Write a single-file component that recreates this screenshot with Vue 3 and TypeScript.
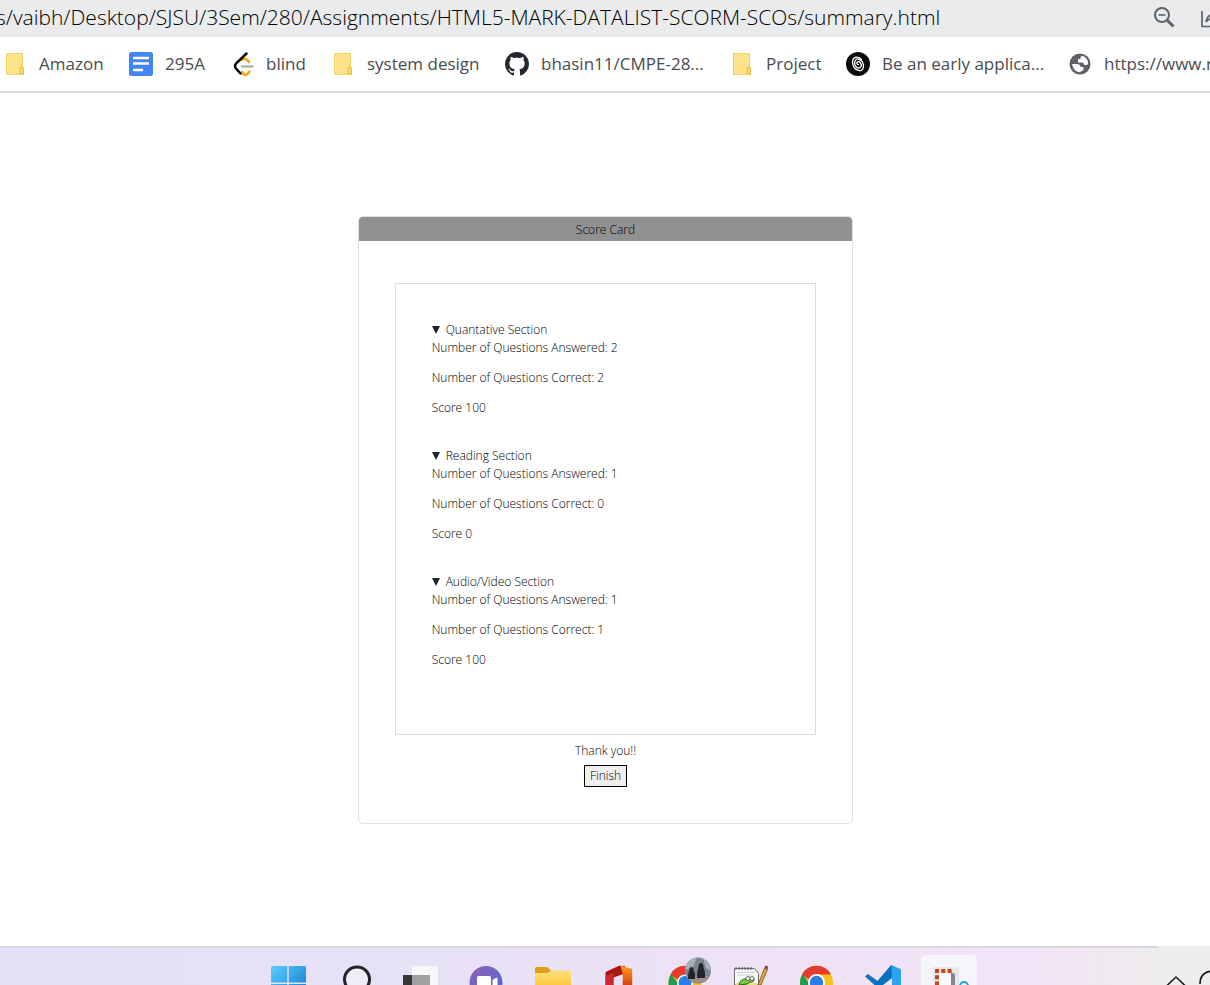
<script setup lang="ts">
import { ref } from 'vue'

interface Bookmark {
  icon: 'folder' | 'docs' | 'leetcode' | 'github' | 'spiral' | 'globe'
  label: string
}

interface Section {
  title: string
  answered: number
  correct: number
  score: number
}

const address = ref('s/vaibh/Desktop/SJSU/3Sem/280/Assignments/HTML5-MARK-DATALIST-SCORM-SCOs/summary.html')

const bookmarks: Bookmark[] = [
  { icon: 'folder', label: 'Amazon' },
  { icon: 'docs', label: '295A' },
  { icon: 'leetcode', label: 'blind' },
  { icon: 'folder', label: 'system design' },
  { icon: 'github', label: 'bhasin11/CMPE-28...' },
  { icon: 'folder', label: 'Project' },
  { icon: 'spiral', label: 'Be an early applica...' },
  { icon: 'globe', label: 'https://www.r' },
]

const sections: Section[] = [
  { title: 'Quantative Section', answered: 2, correct: 2, score: 100 },
  { title: 'Reading Section', answered: 1, correct: 0, score: 0 },
  { title: 'Audio/Video Section', answered: 1, correct: 1, score: 100 },
]
</script>

<template>
  <div class="screen">
    <header class="toolbar">
      <input v-model="address" class="address" type="text" aria-label="Address" />
      <button class="tool" aria-label="Zoom">
        <svg width="24" height="24" viewBox="0 0 24 24" fill="none" stroke="#5f6368" stroke-width="2">
          <circle cx="9" cy="8" r="7" />
          <path d="M14 13 20.500 19.500" stroke-width="3" />
          <path d="M5.500 8h7" stroke-width="1.600" />
        </svg>
      </button>
      <button class="tool share" aria-label="Share">
        <svg width="24" height="24" viewBox="0 0 24 24" fill="none" stroke="#5f6368" stroke-width="1.700">
          <path d="M2 4v15.500h16V15" />
          <path d="M6 15c1-6 4-8 9-8V3l6 6-6 6v-4c-4 0-7 1-9 4z" />
        </svg>
      </button>
    </header>

    <nav class="bookmarks" aria-label="Bookmarks">
      <a v-for="(item, i) in bookmarks" :key="i" class="bookmark" href="#">
        <svg v-if="item.icon === 'folder'" class="mark" viewBox="0 0 24 24">
          <path d="M3.500 1.500h16v14h1v7h-17z" fill="#ffe38a" stroke="#f3d368" />
          <path d="M17 22v-5q0-2 1.500-2t2 2v5z" fill="#fbdc70" stroke="#e3b93c" />
        </svg>
        <svg v-else-if="item.icon === 'docs'" class="mark" viewBox="0 0 24 24">
          <rect width="24" height="24" rx="2.500" fill="#4285f4" />
          <path d="M4 6h16M4 11.500h16M4 18h10" stroke="#fff" stroke-width="2.600" />
        </svg>
        <svg v-else-if="item.icon === 'leetcode'" class="mark" viewBox="0 0 24 24" fill="none" stroke-linecap="round" stroke-width="2.500">
          <path d="M12 8q3-2.500 5 0l2 2M12 20q3 5 6 1.500l1.500-2" stroke="#ffa116" />
          <path d="M12 14.500h10.500" stroke="#b3b3b3" />
          <path d="M16.500 1.500 6 11.500q-2 2.500 0 5l4.500 5" stroke="#070706" />
        </svg>
        <svg v-else-if="item.icon === 'github'" class="mark" viewBox="0 0 16 16">
          <path fill="#24292f" d="M8 0C3.580 0 0 3.580 0 8c0 3.540 2.290 6.530 5.470 7.590.4.070.55-.17.55-.38 0-.19-.01-.82-.01-1.490-2.010.37-2.530-.49-2.690-.94-.09-.23-.48-.94-.82-1.130-.28-.15-.68-.52-.01-.53.63-.01 1.080.58 1.230.82.72 1.210 1.870.87 2.330.66.07-.52.28-.87.51-1.070-1.780-.2-3.640-.89-3.640-3.950 0-.87.31-1.590.82-2.150-.08-.2-.36-1.020.08-2.120 0 0 .67-.21 2.200.82.64-.18 1.320-.27 2-.27s1.360.09 2 .27c1.530-1.040 2.200-.82 2.200-.82.44 1.100.16 1.920.08 2.120.51.56.82 1.270.82 2.150 0 3.070-1.870 3.750-3.650 3.950.29.25.54.73.54 1.480 0 1.070-.01 1.930-.01 2.200 0 .21.15.46.55.38A8.010 8.010 0 0 0 16 8c0-4.420-3.580-8-8-8z" />
        </svg>
        <svg v-else-if="item.icon === 'spiral'" class="mark" viewBox="0 0 24 24">
          <circle cx="12" cy="12" r="12" fill="#0b0b0b" />
          <g fill="none" stroke="#fff" stroke-width="1.300" stroke-linecap="round">
            <path d="M12.500 12.500c-1.500.5-2.500-2-.8-2.700 2-.8 4.300 2 3.300 4.700-1.200 2.600-5 1.500-6-1.500-1-3.500.5-6.500 3.500-6 3.500.7 5.700 5 4.800 8.500-.6 2.500-2.500 3.700-4.800 3" />
            <path d="M15.500 7.500C12.500 3.800 8 4.500 6.800 8c-1.200 4 1.200 9.500 5.200 10.200" />
          </g>
        </svg>
        <svg v-else class="mark" viewBox="0 0 24 24">
          <circle cx="12" cy="12" r="10.500" fill="#5f6368" />
          <path d="M4 12h5.500q3 .5 3 3h3v3l-4 2.300q-6-1-7.500-8.300zM14.500 3.800l-2 1.200v2H10v3.500h5l1.500 2.500h2.500l1.200-1.500q-.5-5.500-5.700-7.700z" fill="#fff" />
        </svg>
        <span class="label">{{ item.label }}</span>
      </a>
    </nav>

    <main class="page">
      <section class="card">
        <h1 class="card-title">Score Card</h1>
        <div class="card-body">
          <div class="results">
            <details v-for="s in sections" :key="s.title" class="result" open>
              <summary>
                <svg class="caret" width="8" height="8" viewBox="0 0 8 8"><path d="M0 0h8L4 8z" fill="#212529" /></svg>
                {{ s.title }}
              </summary>
              <p>Number of Questions Answered: {{ s.answered }}</p>
              <p>Number of Questions Correct: {{ s.correct }}</p>
              <p>Score {{ s.score }}</p>
            </details>
          </div>
          <p class="thanks">Thank you!!</p>
          <button class="finish">Finish</button>
        </div>
      </section>
    </main>

    <footer class="taskbar">
      <div class="edge"></div>
      <div class="apps">
        <button class="app" aria-label="Start">
          <svg viewBox="0 0 66 37">
            <defs>
              <linearGradient id="win" x1="16" y1="18" x2="51" y2="53" gradientUnits="userSpaceOnUse"><stop stop-color="#5ccdfb" /><stop offset="1" stop-color="#0873cf" /></linearGradient>
            </defs>
            <path d="M17.500 18H32.300V34.500H16V19.500q0-1.500 1.500-1.500zM33.700 18H49.500q1.500 0 1.500 1.500v15H33.700zM16 36h16.300v1H16zM33.700 36H51v1H33.700z" fill="url(#win)" />
          </svg>
        </button>
        <button class="app" aria-label="Search">
          <svg viewBox="0 0 66 37"><circle cx="36" cy="31.500" r="12.500" fill="#f0edfa" stroke="#242428" stroke-width="3" /></svg>
        </button>
        <button class="app" aria-label="Task view">
          <svg viewBox="0 0 66 37">
            <path d="M16 27h27v10H16z" fill="#373737" />
            <path d="M25 18h26v19H25z" fill="#f7f7f8" />
            <path d="M25 27h18v10H25z" fill="#a0a0a3" />
          </svg>
        </button>
        <button class="app" aria-label="Chat">
          <svg viewBox="0 0 66 37">
            <defs><linearGradient id="chat" x1="0" y1="0" x2="1" y2="1"><stop stop-color="#8f62b2" /><stop offset="1" stop-color="#4c68d6" /></linearGradient></defs>
            <circle cx="33" cy="34.500" r="16.500" fill="url(#chat)" />
            <path d="M25.500 28H36.500q1.500 0 1.500 1.500V37H24V29.500q0-1.500 1.500-1.500zM39.500 32l4-2.500q1 0 1 1V37h-5z" fill="#fff" />
          </svg>
        </button>
        <button class="app" aria-label="File Explorer">
          <svg viewBox="0 0 66 37">
            <defs><linearGradient id="folder" x1="0" y1="0" x2="0" y2="1"><stop stop-color="#fee07c" /><stop offset="1" stop-color="#fbc93f" /></linearGradient></defs>
            <path d="M17.500 19H28l4 3.500V28H16v-7.500q0-1.500 1.500-1.500z" fill="#dd9d14" />
            <path d="M16 25h12l5-2.500h17.500q1.500 0 1.500 1.500v13H16z" fill="url(#folder)" />
          </svg>
        </button>
        <button class="app" aria-label="Office">
          <svg viewBox="0 0 66 37">
            <defs><linearGradient id="office" x1="0" y1="0" x2="0" y2="1"><stop stop-color="#ff9c22" /><stop offset="1" stop-color="#d9410f" /></linearGradient></defs>
            <path d="M20.500 24 34 17.800 40 18v7.500l-11.500 4V37h-8z" fill="#a71a12" />
            <path d="M20.500 28l8-3v12h-8z" fill="#cf2732" />
            <path d="M35.500 17.800 46 20.500q1.200.3 1.200 1.500v15h-9.500V26z" fill="url(#office)" />
          </svg>
        </button>
        <button class="app" aria-label="Chrome, profile 1">
          <svg viewBox="0 0 66 37">
            <defs><clipPath id="face"><circle cx="47" cy="22.500" r="13" /></clipPath></defs>
            <circle cx="34" cy="34.500" r="16.500" fill="#fbc116" />
            <path d="M17.500 34.500q0-5 2.500-8.500l8 11H17.600z" fill="#229a50" />
            <path d="M19.500 26.500a16.500 16.500 0 0 1 29 0H34l-6.500 6z" fill="#e33b2e" />
            <circle cx="34" cy="34.500" r="8" fill="#fff" />
            <circle cx="34" cy="34.500" r="6.500" fill="#2d7de8" />
            <g clip-path="url(#face)">
              <path d="M34 9h26v27H34z" fill="#788592" />
              <path d="M34 9h12l-4 10-8 3zM52 9h8v14l-5-3z" fill="#a9afb5" />
              <path d="M34 28h26v8H34z" fill="#998f8b" />
              <path d="M37 31q0-7 1.500-9 0-3 2-3t2 3q2 3 1.500 9zM46 30q0-8 1.500-10 0-5 2.500-5t2.500 5q2 3 1.500 10z" fill="#24232b" />
            </g>
          </svg>
        </button>
        <button class="app" aria-label="Notepad++">
          <svg viewBox="0 0 66 37">
            <path d="M17.500 20.500h20l4 5V37h-24z" fill="#fbfcf8" stroke="#6f7170" />
            <path d="M19 19v3m3-3v3m3-3v3m3-3v3m3-3v3m3-3v3" stroke="#555" />
            <path d="M20 24.500h18M20 27h16" stroke="#c6ccd8" />
            <path d="M19 35h21v2H19z" fill="#e8e07b" />
            <path d="M22 37q1-6 7-6 1-3 4-1 4-2 4 2-1 3-4 2l-3 2z" fill="#79c943" stroke="#315d21" />
            <circle cx="31" cy="30.500" r="2" fill="#fff" stroke="#263820" stroke-width=".7" />
            <circle cx="35" cy="30.500" r="2" fill="#fff" stroke="#263820" stroke-width=".7" />
            <path d="M41 37l6.500-17 3 1.500L44 37z" fill="#dfa43d" stroke="#735020" stroke-width=".8" />
            <path d="M47.500 20l1-2.500 2.500 1-.5 3z" fill="#7b4040" />
          </svg>
        </button>
        <button class="app" aria-label="Chrome">
          <svg viewBox="0 0 66 37">
            <circle cx="33.500" cy="34.500" r="16.500" fill="#fbc116" />
            <path d="M17 34.500q0-5 2.500-8.500l8 11H17.200z" fill="#229a50" />
            <path d="M19 26.500a16.500 16.500 0 0 1 29 0H33.500l-6.500 6z" fill="#e33b2e" />
            <circle cx="33.500" cy="34.500" r="8.500" fill="#fff" />
            <circle cx="33.500" cy="34.500" r="6.700" fill="#2d7de8" />
          </svg>
        </button>
        <button class="app" aria-label="Visual Studio Code">
          <svg viewBox="0 0 66 37">
            <path d="M16 28.500l3-2.500 12.500 9V37h-6z" fill="#1673b5" />
            <path d="M25 37 42 17.300l3.500 1.200V28L34 37z" fill="#0871bd" />
            <path d="M42.500 17.200 50.500 20.500q1.500.7 1.500 2V37h-9z" fill="#2ba6ee" />
          </svg>
        </button>
        <button class="app active" aria-label="Snipping Tool">
          <svg viewBox="0 0 66 37">
            <path d="M17 18h23q3 0 3 3v16H17z" fill="#e8e8ec" />
            <path d="M23 24h12v13H23z" fill="#fafafc" />
            <path d="M35 24h2q2 0 2 2v11h-4z" fill="#85858b" />
            <path d="M19 22h17M21 26.300V37" fill="none" stroke="#cb4319" stroke-width="4" stroke-dasharray="4 2.300" />
            <circle cx="48" cy="37" r="4" fill="none" stroke="#23a3dc" stroke-width="2" />
          </svg>
        </button>
      </div>
      <button class="tray" aria-label="Show hidden icons">
        <svg width="52" height="37" viewBox="0 0 52 37" fill="none" stroke="#1c1c1c" stroke-width="1.600">
          <path d="M9 37.500l9-8.500 9 8.500M42 36q0-13 14-13" />
        </svg>
      </button>
    </footer>
  </div>
</template>

<style>
body {
  margin: 0;
}
</style>

<style scoped>
.screen {
  display: flex;
  flex-direction: column;
  height: 100vh;
  overflow: hidden;
  background: #fff;
  color: #212529;
  font-family: "Open Sans", "Noto Sans", sans-serif;
}

button {
  font-family: inherit;
}

.toolbar {
  display: flex;
  flex: none;
  align-items: center;
  height: 37px;
  overflow: hidden;
  background: #e9ebed;
}

.address {
  flex: 1;
  min-width: 0;
  height: 37px;
  padding: 0 0 4px;
  box-sizing: border-box;
  border: 0;
  outline: 0;
  background: transparent;
  color: #000;
  font: 300 21px/33px "Open Sans", "Noto Sans", sans-serif;
  text-indent: -4px;
}

.tool {
  display: flex;
  flex: none;
  width: 24px;
  margin-right: 23px;
  padding: 0;
  border: 0;
  background: transparent;
}

.share {
  width: 10px;
  margin-right: 0;
  overflow: hidden;
}

.share svg {
  flex: none;
}

.bookmarks {
  display: grid;
  flex: none;
  grid-template-columns: 126px 101px 101px 174px 225px 116px 222px 1fr;
  height: 54px;
  padding-left: 3px;
  overflow: hidden;
  border-bottom: 2px solid #dadbdd;
}

.bookmark {
  display: flex;
  align-items: center;
  gap: 12px;
  min-width: 0;
  color: #494c50;
  font-size: 17px;
  text-decoration: none;
  white-space: nowrap;
}

.label {
  padding-bottom: 2px;
}

.mark {
  flex: none;
  width: 24px;
  height: 24px;
}

.page {
  display: flex;
  flex: 1;
  align-items: center;
  justify-content: center;
  padding-left: 1px;
  color: #000;
  font-size: 12px;
  font-weight: 300;
  line-height: 18px;
}

.card {
  box-sizing: border-box;
  width: 41%;
  border: 1px solid #dfdfdf;
  border-radius: 5px;
  overflow: hidden;
}

.card-title {
  margin: 0;
  padding: 4px 12px 2px;
  background: #909193;
  font-size: 12px;
  font-weight: inherit;
  text-align: center;
}

.card-body {
  display: flex;
  flex-direction: column;
  align-items: center;
  padding: 42px 36px 36px;
}

.results {
  box-sizing: border-box;
  width: 100%;
  padding: 37px 36px 35px;
  border: 1px solid #dedede;
}

.result {
  margin-bottom: 30px;
}

.result p {
  margin: 0 0 12px;
}

summary {
  display: flex;
  align-items: center;
  gap: 6px;
  list-style: none;
}

.thanks {
  margin: 7px 0 5px;
}

.finish {
  height: 22px;
  padding: 1px 5px 0;
  border: 1px solid #000;
  background: #efefef;
  color: #000;
  font-size: 12px;
  font-weight: inherit;
  line-height: 18px;
}

.taskbar {
  display: grid;
  flex: none;
  grid-template-columns: 255px auto 1fr;
  height: 39px;
  overflow: hidden;
  background: linear-gradient(90deg, #e3e1f8 0%, #e7e1f6 35%, #efe2f5 65%, #f2e4f7 85%, #eeedec 97%);
}

.edge {
  grid-column: 1 / -1;
  height: 2px;
  margin-right: 52px;
  background: #d8d5df;
}

.apps {
  display: flex;
  grid-column: 2;
}

.app {
  display: flex;
  width: 66px;
  height: 37px;
  padding: 0;
  border: 0;
  background: transparent;
}

.app svg {
  width: 66px;
  height: 37px;
}

.active {
  width: 56px;
  height: 31px;
  margin: 7px 5px 0 6px;
  border-radius: 5px 5px 0 0;
  background: #f8f4fb;
  align-items: flex-end;
  justify-content: center;
}

.active svg {
  flex: none;
}

.tray {
  display: flex;
  justify-self: end;
  padding: 0;
  border: 0;
  background: transparent;
}
</style>
